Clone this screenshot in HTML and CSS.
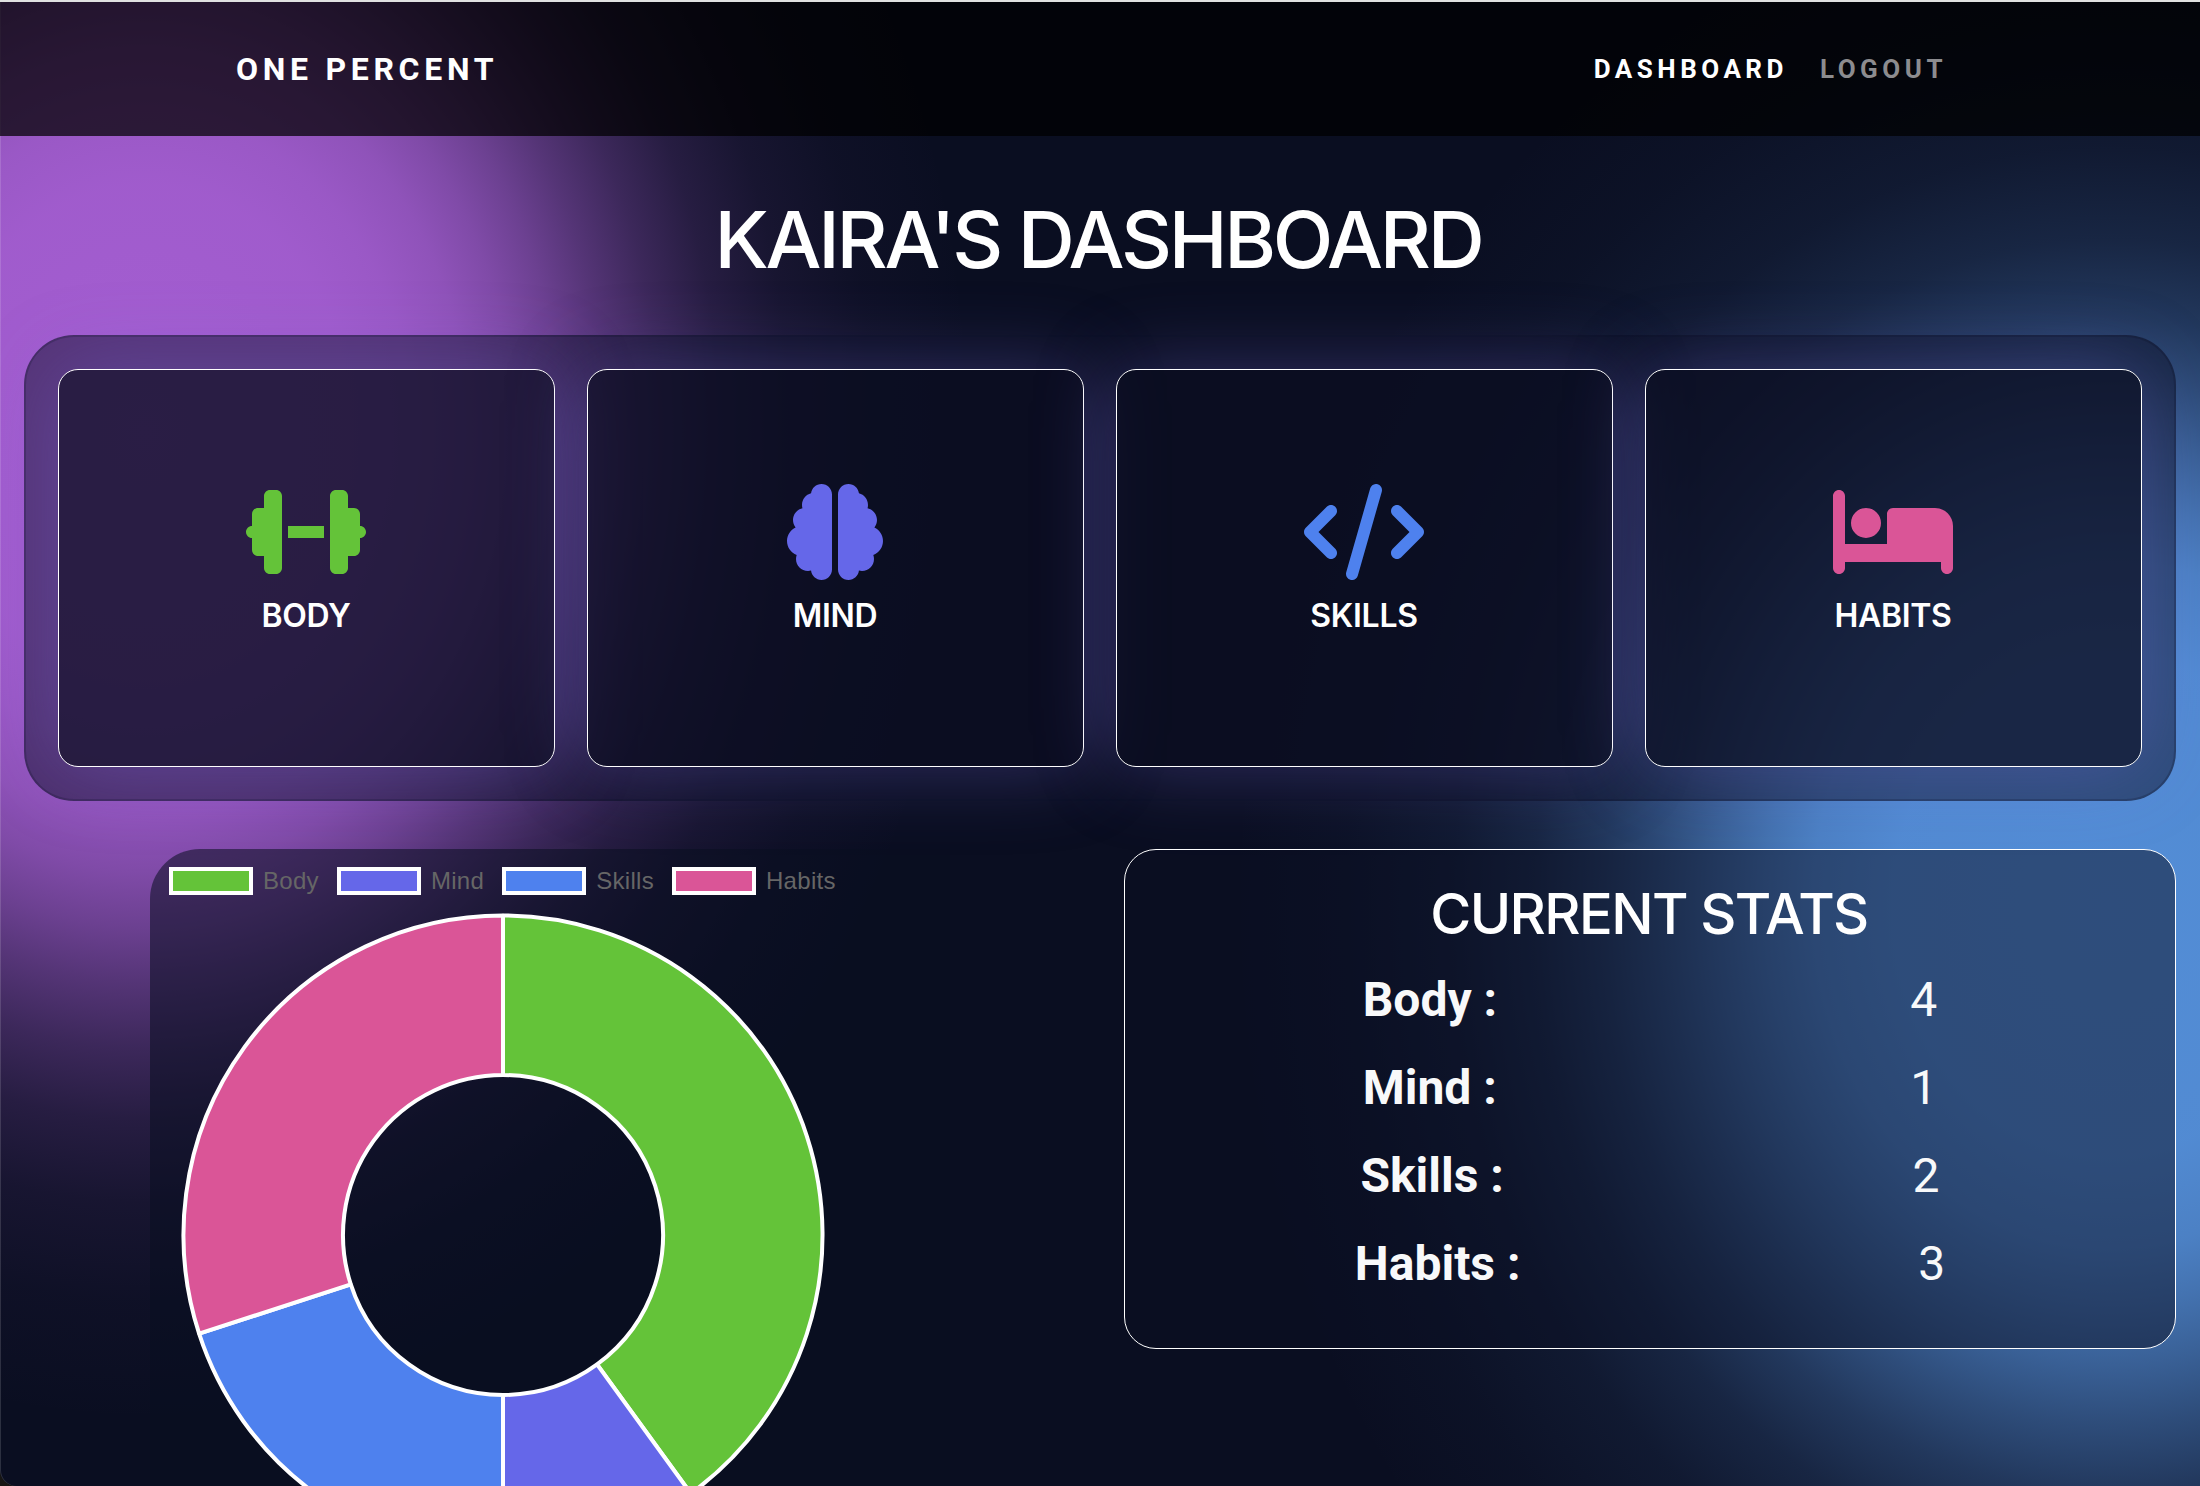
FILE: index.html
```html
<!DOCTYPE html>
<html lang="en">
<head>
<meta charset="utf-8">
<title>One Percent</title>
<link rel="stylesheet" href="styles.css">
</head>
<body>
<header class="navbar">
  <a class="brand">ONE PERCENT</a>
  <nav class="nav-links"><a class="nav-link active">DASHBOARD</a><a class="nav-link">LOGOUT</a></nav>
</header>
<main>
  <h1 class="page-title">KAIRA'S DASHBOARD</h1>
  <section class="categories">
    <article class="card body">
      <svg class="icon" viewBox="0 0 640 512"><path d="M96 64c0-17.7 14.3-32 32-32h32c17.7 0 32 14.3 32 32V448c0 17.7-14.3 32-32 32H128c-17.7 0-32-14.3-32-32V384H64c-17.7 0-32-14.3-32-32V288c-17.7 0-32-14.3-32-32s14.3-32 32-32V160c0-17.7 14.3-32 32-32H96V64zm448 0v64h32c17.7 0 32 14.3 32 32v64c17.7 0 32 14.3 32 32s-14.3 32-32 32v64c0 17.7-14.3 32-32 32H544v64c0 17.7-14.3 32-32 32H480c-17.7 0-32-14.3-32-32V64c0-17.7 14.3-32 32-32h32c17.7 0 32 14.3 32 32zM416 224v64H224V224H416z"/></svg>
      <h2>BODY</h2>
    </article>
    <article class="card mind">
      <svg class="icon narrow" viewBox="0 0 512 512"><path d="M184 0c30.9 0 56 25.1 56 56V456c0 30.9-25.1 56-56 56c-28.9 0-52.7-21.9-55.7-50.1c-5.2 1.4-10.7 2.1-16.3 2.1c-35.3 0-64-28.7-64-64c0-7.4 1.3-14.6 3.6-21.2C21.4 367.4 0 338.2 0 304c0-31.9 18.7-59.5 45.8-72.3C37.1 220.8 32 207 32 192c0-30.7 21.6-56.3 50.4-62.6C80.8 123.9 80 118 80 112c0-29.9 20.6-55.1 48.3-62.1C131.3 21.9 155.1 0 184 0zM328 0c28.9 0 52.6 21.9 55.7 49.9c27.8 7 48.3 32.1 48.3 62.1c0 6-.8 11.9-2.4 17.4c28.8 6.2 50.4 31.9 50.4 62.6c0 15-5.1 28.8-13.8 39.7C493.3 244.5 512 272.1 512 304c0 34.2-21.4 63.4-51.6 74.8c2.3 6.6 3.6 13.8 3.6 21.2c0 35.3-28.7 64-64 64c-5.6 0-11.1-.7-16.3-2.1c-3 28.2-26.8 50.1-55.7 50.1c-30.9 0-56-25.1-56-56V56c0-30.9 25.1-56 56-56z"/></svg>
      <h2>MIND</h2>
    </article>
    <article class="card skills">
      <svg class="icon" viewBox="0 0 640 512"><path d="M392.8 1.2c-17-4.9-34.7 5-39.6 22l-128 448c-4.9 17 5 34.7 22 39.6s34.7-5 39.6-22l128-448c4.9-17-5-34.7-22-39.6zm80.6 120.1c-12.5 12.5-12.5 32.8 0 45.3L562.7 256l-89.4 89.4c-12.5 12.5-12.5 32.8 0 45.3s32.8 12.5 45.3 0l112-112c12.5-12.5 12.5-32.8 0-45.3l-112-112c-12.5-12.5-32.8-12.5-45.3 0zm-306.7 0c-12.5-12.5-32.8-12.5-45.3 0l-112 112c-12.5 12.5-12.5 32.8 0 45.3l112 112c12.5 12.5 32.8 12.5 45.3 0s12.5-32.8 0-45.3L77.3 256l89.4-89.4c12.5-12.5 12.5-32.8 0-45.3z"/></svg>
      <h2>SKILLS</h2>
    </article>
    <article class="card habits">
      <svg class="icon" viewBox="0 0 640 512"><path d="M32 32c17.7 0 32 14.3 32 32V320H288V160c0-17.7 14.3-32 32-32H544c53 0 96 43 96 96V448c0 17.7-14.3 32-32 32s-32-14.3-32-32V416H64v32c0 17.7-14.3 32-32 32s-32-14.3-32-32V64C0 46.3 14.3 32 32 32zm144 96a80 80 0 1 1 0 160 80 80 0 1 1 0-160z"/></svg>
      <h2>HABITS</h2>
    </article>
  </section>
  <section class="overview">
    <div class="chart-panel">
      <ul class="legend">
        <li class="body">Body</li><li class="mind">Mind</li><li class="skills">Skills</li><li class="habits">Habits</li>
      </ul>
      <svg class="doughnut" viewBox="-322 -322 644 644">
        <path class="body" d="M0-319.5A319.5 319.5 0 0 1 187.8 258.5L94.05 129.4A160 160 0 0 0 0-160Z"/>
        <path class="mind" d="M187.8 258.5A319.5 319.5 0 0 1 0 319.5V160A160 160 0 0 0 94.05 129.4Z"/>
        <path class="skills" d="M0 319.5A319.5 319.5 0 0 1-303.9 98.7L-152.2 49.4A160 160 0 0 0 0 160Z"/>
        <path class="habits" d="M-303.9 98.7A319.5 319.5 0 0 1 0-319.5V-160A160 160 0 0 0-152.2 49.4Z"/>
      </svg>
    </div>
    <div class="stats">
      <h2>CURRENT STATS</h2>
      <dl>
        <div class="stat"><dt>Body :</dt><dd>4</dd></div>
        <div class="stat"><dt>Mind :</dt><dd>1</dd></div>
        <div class="stat"><dt>Skills :</dt><dd>2</dd></div>
        <div class="stat"><dt>Habits :</dt><dd>3</dd></div>
      </dl>
    </div>
  </section>
</main>
</body>
</html>
```
FILE: styles.css
```css
*, *::before { box-sizing: border-box; margin: 0; padding: 0; }

html {
  height: 1486px;
  overflow: hidden;
  background: #171614;
}

body {
  height: 1486px;
  overflow: hidden;
  border-top: 2px solid #e0e1e1;
  border-bottom-left-radius: 16px;
  box-shadow: inset 1px 0 rgba(255, 255, 255, .14);
  font-family: Roboto, sans-serif;
  color: #fff;
  background-color: #0a0e21;
  background-image:
    radial-gradient(ellipse 460px 550px at 145px 430px, #a45ed2 0%, rgba(163,93,208,.98) 45%, rgba(163,93,208,.94) 58%, rgba(163,93,208,.87) 70%, rgba(163,93,208,.77) 80%, rgba(163,93,208,.64) 90%, rgba(163,93,208,.49) 100%, rgba(163,93,208,.33) 112%, rgba(163,93,208,.19) 125%, rgba(163,93,208,.09) 140%, rgba(163,93,208,.03) 158%, rgba(163,93,208,0) 180%),
    radial-gradient(ellipse 450px 520px at 2110px 903px, #538dd6 0%, rgba(83,141,214,.98) 48%, rgba(83,141,214,.9) 66%, rgba(83,141,214,.79) 77%, rgba(83,141,214,.65) 88%, rgba(83,141,214,.49) 100%, rgba(83,141,214,.33) 113%, rgba(83,141,214,.19) 128%, rgba(83,141,214,.09) 146%, rgba(83,141,214,.03) 170%, rgba(83,141,214,0) 195%);
}

.navbar {
  display: flex;
  align-items: center;
  justify-content: space-between;
  height: 134px;
  padding: 0 253px 1px 236px;
  background: rgba(0, 0, 0, .72);
}
.brand { font-size: 32px; font-weight: 700; letter-spacing: 4.7px; }
.nav-links { display: flex; gap: 32px; }
.nav-link { font-size: 26px; font-weight: 700; letter-spacing: 4.5px; color: #8c8c8f; }
.nav-link.active { color: #fff; }

.page-title {
  height: 199px;
  padding: 56px 4px 0 0;
  text-align: center;
  font: 540 79px/1.2 Inter, sans-serif;
  letter-spacing: -3.3px;
}

.categories {
  display: grid;
  grid-template-columns: repeat(4, 1fr);
  gap: 32px;
  height: 466px;
  margin: 0 24px;
  padding: 32px;
  border: 2px solid rgba(10, 12, 30, .22);
  border-radius: 50px;
  background: rgba(10, 14, 33, .5);
}
.card {
  display: flex;
  flex-direction: column;
  align-items: center;
  padding: 114px 1px 0 0;
  border: 1px solid #fff;
  border-radius: 20px;
  background: rgba(11, 14, 34, .6);
  box-shadow: 0 0 80px rgba(118, 104, 215, .36);
}
.card h2 {
  margin-top: 17px;
  font: 560 32px/38px Inter, sans-serif;
  letter-spacing: -.3px;
}
.icon { width: 120px; height: 96px; }
.icon.narrow { width: 96px; }
.body { fill: #64c339; --swatch: #64c339; }
.mind { fill: #6567e9; --swatch: #6567e9; }
.skills { fill: #4e81ee; --swatch: #4e81ee; }
.habits { fill: #da5597; --swatch: #da5597; }

.overview {
  display: flex;
  justify-content: space-between;
  align-items: flex-start;
  margin: 48px 24px 0 150px;
}
.chart-panel {
  width: 800px;
  height: 637px;
  padding: 18px 0 0 19px;
  border-radius: 50px 0 0 0;
  background: rgba(10, 14, 33, .55);
  overflow: hidden;
}
.legend { display: flex; gap: 18px; list-style: none; }
.legend li {
  display: flex;
  align-items: center;
  gap: 10px;
  height: 28px;
  font: 24px "Liberation Sans", Arial, sans-serif;
  letter-spacing: .3px;
  color: #666;
}
.legend li::before {
  content: "";
  width: 84px;
  height: 28px;
  border: 4px solid #fff;
  background: var(--swatch);
}
.doughnut { display: block; width: 644px; height: 644px; margin: 18px 0 0 12px; }
.doughnut path { stroke: #fff; stroke-width: 4; stroke-linejoin: bevel; }

.stats {
  width: 1052px;
  height: 500px;
  padding: 31px 31px;
  border: 1px solid #fff;
  border-radius: 32px;
  background: rgba(10, 14, 33, .5);
}
.stats h2 {
  padding-right: 2px;
  text-align: center;
  font: 540 56px/66px Inter, sans-serif;
  letter-spacing: -1.6px;
}
.stats dl { margin-top: 8px; }
.stat {
  display: flex;
  justify-content: space-around;
  align-items: center;
  height: 88px;
  font-size: 48px;
  color: #f8f9fa;
}
.stat dt { font-weight: 700; letter-spacing: 0; }
```
